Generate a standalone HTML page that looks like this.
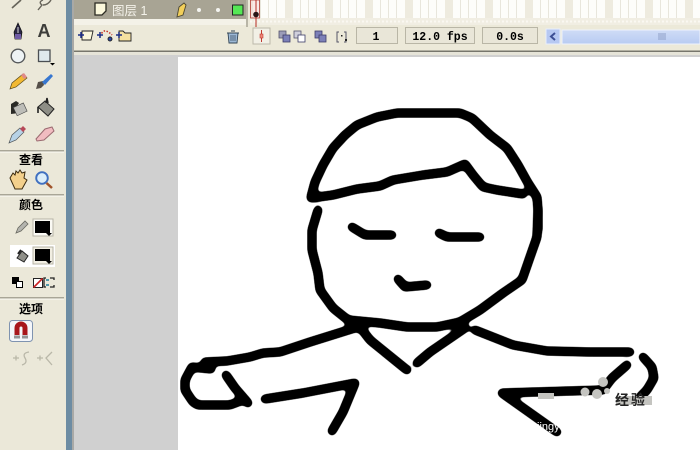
<!DOCTYPE html>
<html>
<head>
<meta charset="utf-8">
<style>
html,body{margin:0;padding:0;background:#fff}
body{width:700px;height:450px;overflow:hidden}
svg{display:block}
.cn{font-family:"Liberation Sans","Noto Sans CJK SC",sans-serif;font-weight:700;font-size:12px;fill:#000;text-anchor:middle}
.m{font-family:"Liberation Mono",monospace;font-weight:700;font-size:11.5px;fill:#000;text-anchor:middle}
</style>
</head>
<body>
<svg width="700" height="450" viewBox="0 0 700 450" xmlns="http://www.w3.org/2000/svg">
<defs>
<pattern id="fr" x="5" y="0" width="40" height="18" patternUnits="userSpaceOnUse">
<rect width="40" height="18" fill="#fdfdfa"/>
<rect width="8" height="18" fill="#eeebdf"/>
<rect x="15" width="1" height="18" fill="#e8e6dc"/><rect x="23" width="1" height="18" fill="#e8e6dc"/><rect x="31" width="1" height="18" fill="#e8e6dc"/>
</pattern>
<linearGradient id="sb" x1="0" y1="0" x2="0" y2="1"><stop offset="0" stop-color="#cfdcf6"/><stop offset="1" stop-color="#b8cbf2"/></linearGradient>
<filter id="ink" filterUnits="userSpaceOnUse" x="170" y="90" width="530" height="360" color-interpolation-filters="sRGB">
<feGaussianBlur stdDeviation="2"/>
<feComponentTransfer><feFuncA type="linear" slope="7" intercept="-3"/></feComponentTransfer>
<feGaussianBlur stdDeviation="0.350"/>
</filter>
<filter id="soft" filterUnits="userSpaceOnUse" x="0" y="0" width="700" height="450"><feGaussianBlur stdDeviation="0.350"/></filter>
</defs>
<!-- backgrounds -->
<rect width="700" height="450" fill="#d0d0d0"/>
<rect x="178" y="57" width="522" height="393" fill="#fff"/>
<rect x="0" y="0" width="66" height="450" fill="#ebe8d9"/>
<rect x="66" y="0" width="6" height="450" fill="#6d8ca3"/>
<rect x="72" y="0" width="2" height="450" fill="#a9a9a6"/>
<!-- top panel -->
<rect x="74" y="0" width="626" height="51" fill="#ece9d9"/>
<rect x="74" y="0" width="172" height="19" fill="#a8a494"/>
<rect x="74" y="19" width="172" height="6" fill="#f4f2e8"/>
<rect x="246" y="0" width="2" height="27" fill="#b8b5a6"/>
<rect x="250" y="0" width="450" height="18" fill="url(#fr)"/>
<rect x="250" y="18" width="450" height="7" fill="#f1eee3"/>
<path d="M250 21.5H700" stroke="#faf8f2" stroke-width="2" stroke-dasharray="2 2"/>
<rect x="74" y="50.500" width="626" height="1.500" fill="#77766c"/>
<rect x="74" y="52" width="626" height="3" fill="#e6e4d8"/>
<g filter="url(#soft)">
<!-- layer row -->
<path d="M95 3h11v8l-4 4h-7z" fill="#fbf8dc" stroke="#2a2a22" stroke-width="1.300"/>
<path d="M177 17l2-10 5-4 2 2-3 10z" fill="#f2cf5a" stroke="#4b4632" stroke-width=".9"/>
<circle cx="199" cy="10" r="2" fill="#f4f4f0"/><circle cx="218" cy="10" r="2" fill="#f4f4f0"/>
<rect x="232.500" y="5" width="10.500" height="10" fill="#55e855" stroke="#222"/>
<!-- layer buttons -->
<g stroke="#222" stroke-width=".9">
<path d="M82 31h11l-2 9h-9z" fill="#fbf8dc"/><path d="M78 35h6M81 32v6" stroke="#1c2f86" stroke-width="1.500"/>
<path d="M100 36q3-6 6-5t6 4" fill="none" stroke="#c43226" stroke-width="1.500" stroke-dasharray="1.500 1.500"/>
<circle cx="110" cy="39" r="2" fill="#2c46a8"/><path d="M97 35h6M100 32v6" stroke="#1c2f86" stroke-width="1.500"/>
<path d="M119 31h4l2 2h6v8h-12z" fill="#f4e0a0"/><path d="M116 35h6M119 32v6" stroke="#1c2f86" stroke-width="1.500"/>
<path d="M228 33h10l-1 10h-8z" fill="#9db9d6" stroke="#345"/><path d="M227 33h12M231 31h4" stroke="#345"/><path d="M231 35v6M233 35v6M235 35v6" stroke="#345" stroke-width=".7"/>
</g>
<!-- timeline bottom buttons -->
<rect x="253" y="28" width="17" height="16" fill="#f2f0e6" stroke="#bcb9aa"/>
<path d="M261.500 30v12" stroke="#c23a30"/><rect x="260" y="34" width="3" height="4" fill="#ee8a7a" stroke="#c23a30" stroke-width=".6"/>
<rect x="279" y="31" width="7" height="7" fill="#9c9cb8" stroke="#55556e" stroke-width=".8"/><rect x="283" y="35" width="7" height="7" fill="#7b80b8" stroke="#3d3d68" stroke-width=".8"/>
<rect x="294" y="31" width="7" height="7" fill="#cfcfdc" stroke="#55556e" stroke-width=".8"/><rect x="298" y="35" width="7" height="7" fill="#fff" stroke="#3d3d68" stroke-width=".8"/>
<rect x="315" y="31" width="7" height="7" fill="#7b80b8" stroke="#3d3d68" stroke-width=".8"/><rect x="319" y="35" width="7" height="7" fill="#7b80b8" stroke="#3d3d68" stroke-width=".8"/>
<path d="M339 32h-2v10h2M344 32h2v10h-2" fill="none" stroke="#556" stroke-width="1"/><rect x="341" y="35" width="1.500" height="1.500" fill="#222"/><rect x="345" y="39" width="2" height="2" fill="#222"/>
<!-- scrollbar -->
<rect x="546" y="29" width="14" height="15" fill="#b6c8f2" stroke="#e8eefc"/>
<path d="M555 33l-4 3.500 4 3.500" fill="none" stroke="#3d4f94" stroke-width="2"/>
<rect x="562" y="30" width="138" height="14" fill="url(#sb)" stroke="#eef2fc"/>
<path d="M659 33v7M661 33v7M663 33v7M665 33v7" stroke="#8fa0c8"/>
<!-- tools -->
<path d="M12 8L21 0" stroke="#66645a" stroke-width="1.600"/>
<path d="M38 10l4-5q-4-3 1-5M51 0q-3 5-8 5" fill="none" stroke="#66645a" stroke-width="1.400"/>
<path d="M18 23l4 9-1 7h-6l-1-7z" fill="#2c2844" stroke="#111" stroke-width=".7"/><path d="M18 27v6" stroke="#ddd"/><rect x="15" y="34" width="6" height="5" fill="#6f5ba6"/>
<circle cx="18" cy="56" r="6.800" fill="#eef3f5" stroke="#55585a" stroke-width="1.400"/>
<rect x="38.500" y="50" width="11.500" height="11.500" fill="#dfe9ee" stroke="#4c4f52" stroke-width="1.300"/>
<path d="M50 63h5l-2.500 2.500z" fill="#000"/>
<path d="M10 89l2-6 11-9 4 4-11 9z" fill="#f2b930" stroke="#5a4a1c" stroke-width=".7"/><path d="M21 75l3-2 3 4-3 2z" fill="#e08a88"/>
<path d="M36 89l2-7 5-1 1 4-3 3z" fill="#55504a"/><path d="M42 82l9-8 2 2-8 9z" fill="#3777d0"/>
<path d="M11 114v-10l5-3 3 2-2 3 2 7z" fill="#2a2a28"/><rect x="15" y="105" width="11" height="9" fill="#bdbdb8" stroke="#444" stroke-width=".6" transform="rotate(-25 20 110)"/>
<path d="M38 107l7-6 9 8-6 7z" fill="#8e8e86" stroke="#222"/><path d="M46 103l1-5 1 5" stroke="#222" fill="none" stroke-width="1.500"/><path d="M38 107v6" stroke="#222" stroke-width="1.600"/>
<path d="M9 143l3-8 8-7 4 4-8 8z" fill="#b7d2e6" stroke="#50555a" stroke-width=".7"/><path d="M20 129l3-3 3 3-3 3z" fill="#b74a58"/>
<path d="M36 139l9-10 7-2 2 4-10 9-7 1z" fill="#f1bcc0" stroke="#9a6a70"/>
<!-- hand / zoom -->
<path d="M10 178l3-5 2 2 1-4 2 2 2-3 2 3 3-1-1 6 3 2-5 9h-7z" fill="#f3d08c" stroke="#3a2a10" stroke-width="1"/>
<circle cx="42" cy="178" r="5.800" fill="#dceefa" stroke="#3f6fc0" stroke-width="1.900"/><path d="M46.500 183l5.500 5" stroke="#a0522a" stroke-width="2.500"/>
<!-- colors -->
<path d="M16 233l2-5 7-7 3 3-7 7z" fill="#b4b4ae" stroke="#6a6a62" stroke-width=".8"/>
<rect x="33" y="219" width="20" height="17" fill="#fbfaf4" stroke="#b7b4a6"/>
<rect x="35" y="221" width="15" height="12" fill="#000"/><path d="M46 233h6l-3 3z" fill="#000"/>
<rect x="10" y="245" width="45" height="22" fill="#fff"/>
<path d="M17 258l5-7 6 5-4 6z" fill="#8f8f88" stroke="#222"/><path d="M18 254l3-4" stroke="#222" stroke-width="2"/>
<rect x="33" y="247" width="20" height="17" fill="#f1eee2" stroke="#b7b4a6"/>
<rect x="35" y="249" width="15" height="12" fill="#000"/><path d="M46 261h6l-3 3z" fill="#000"/>
<rect x="12.500" y="277.500" width="6" height="6" fill="#000" stroke="#000"/><rect x="16.500" y="281.500" width="6" height="6" fill="#fff" stroke="#000"/>
<rect x="33.500" y="278.500" width="9" height="9" fill="#fff" stroke="#222"/><path d="M33.500 287.500l9-9" stroke="#c22" stroke-width="1.600"/>
<path d="M46 278h-2v9h2M50 278h4v2M50 287h4v-2" fill="none" stroke="#222" stroke-width="1.300"/><path d="M46 280h3M46 285h3" stroke="#1f7f9a" stroke-width="1.600"/>
<!-- magnet -->
<rect x="9.500" y="320.500" width="23" height="21" rx="3" fill="#f4f6fa" stroke="#7f93b0"/>
<path d="M17 335V328a4 4 0 0 1 8 0V335" fill="none" stroke="#a8161a" stroke-width="5"/>
<path d="M14.500 337h5M22.500 337h5" stroke="#333" stroke-width="3" stroke-dasharray="1 1"/>
<!-- disabled -->
<g fill="none" stroke="#b9b7a8" stroke-width="1.300">
<path d="M13 358h6M16 355.500v5"/><path d="M29 352q-7 1-4 6t-3 7"/>
<path d="M37 358h6M40 355.500v5"/><path d="M52 352l-6 6 6 7"/>
</g>
<!-- playhead -->
<rect x="250.500" y="0" width="9" height="18" fill="#f6d6d2" fill-opacity=".5" stroke="#b03a30" stroke-width=".8"/>
<path d="M256 0V27" stroke="#b52a22"/>
<circle cx="256" cy="14.500" r="2.800" fill="#2a1414"/>
</g>
<!-- layer text -->
<text x="112" y="15" font-family="'Liberation Sans','Noto Sans CJK SC',sans-serif" font-size="12.500" fill="#f4f2ea">图层 1</text>
<!-- fields -->
<g fill="#e9e6d8" stroke="#b9b6a6"><rect x="356.500" y="27.500" width="41" height="16"/><rect x="405.500" y="27.500" width="69" height="16"/><rect x="482.500" y="27.500" width="55" height="16"/></g>
<text class="m" x="376" y="40">1</text>
<text class="m" x="440" y="40">12.0 fps</text>
<text class="m" x="510" y="40">0.0s</text>
<!-- toolbar separators -->
<g fill="#a9a697"><rect x="0" y="150" width="64" height="1.500"/><rect x="0" y="194" width="64" height="1.500"/><rect x="0" y="297" width="64" height="1.500"/></g>
<g fill="#fdfcf6"><rect x="0" y="151.500" width="64" height="1"/><rect x="0" y="195.500" width="64" height="1"/><rect x="0" y="298.500" width="64" height="1"/></g>
<text class="cn" x="31" y="164">查看</text>
<text class="cn" x="31" y="209">颜色</text>
<text class="cn" x="31" y="313">选项</text>
<text x="44" y="37" font-family="'Liberation Sans',sans-serif" font-weight="700" font-size="18" fill="#3d3d3a" text-anchor="middle">A</text>
<!-- drawing -->
<g filter="url(#ink)" fill="none" stroke="#000" stroke-width="9.500" stroke-linecap="round" stroke-linejoin="round">
<path d="M311 197L315 182 323 165 333 148 345 135 357 125 377 117 397 113 423 113 460 113 472 118 490 135 507 148 518 165 528 183 537 197 538 210 538 230"/>
<path d="M311 198L333 195 357 189 380 186 393 180 423 175 447 172 465 164 473 175 483 187 497 190 523 194"/>
<path d="M318 210L312 230 312 250 318 273 320 290 333 308 348 320 380 323 407 327 437 327 460 322 480 310 503 293 522 280 530 257 537 237 538 210"/>
<path d="M352 227L365 235 392 235"/>
<path d="M439 233L447 237 480 237"/>
<path d="M398 279L405 287 427 285"/>
<path d="M205 362L227 361 250 357 263 353 280 352 310 342 358 327"/>
<path d="M211 369L192 367 185 380 185 390 193 402 198 405 230 405 243 400"/>
<path d="M226 375L235 388 248 403"/>
<path d="M265 399L303 393 355 383 343 412 332 431"/>
<path d="M360 327L370 340 407 370"/>
<path d="M417 363L430 352 465 328"/>
<path d="M475 330L513 345 547 351 590 352 630 352"/>
<path d="M643 357L652 367 654 378 647 390 640 397"/>
<path d="M627 365L612 378 603 390 502 393 557 432"/>
</g>
<!-- watermark -->
<g fill="#c4c4c0">
<circle cx="603" cy="382" r="5"/><circle cx="585" cy="392" r="4.500"/><circle cx="597" cy="394" r="5"/><circle cx="607" cy="391" r="3"/>
<rect x="538" y="393" width="16" height="6"/><rect x="616" y="396" width="36" height="9"/>
</g>
<text x="615" y="405" font-family="'Liberation Sans','Noto Sans CJK SC',sans-serif" font-weight="700" font-size="14" letter-spacing="2" fill="#222">经验</text>
<text x="537" y="430" font-family="'Liberation Sans',sans-serif" font-size="11" fill="#fff">jingyan</text>
</svg>
</body>
</html>
